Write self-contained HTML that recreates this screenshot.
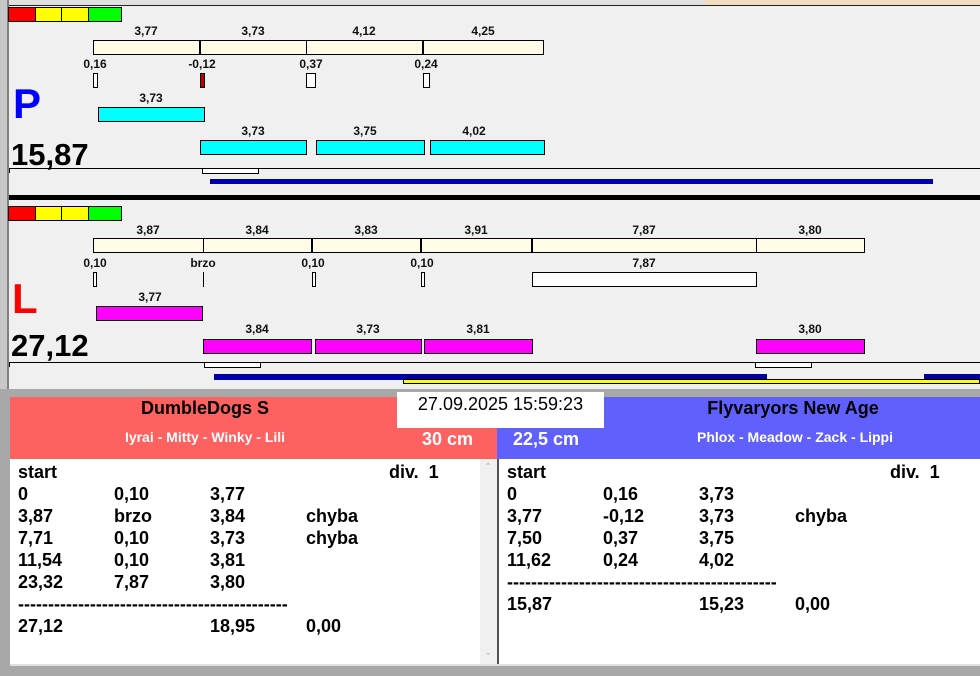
<!DOCTYPE html>
<html><head><meta charset="utf-8"><style>
*{margin:0;padding:0;box-sizing:border-box}
body{width:980px;height:676px;overflow:hidden;background:#f0f0f0;position:relative;font-family:"Liberation Sans",Arial,sans-serif}
div{position:absolute}
.b{border:1px solid #000}
.cr{background:#fffbe6}
.cy{background:#00ffff}
.mg{background:#ff00ff}
.w{background:#fff}
.l{font-size:12px;font-weight:bold;width:60px;text-align:center;line-height:14px;color:#111}
.t{font-size:18px;font-weight:bold;line-height:22px;color:#000;white-space:pre}
</style></head><body>
<div style="left:0;top:0;width:980px;height:5px;background:#e0e0e0"></div>
<div style="left:705px;top:0;width:275px;height:5px;background:#f0dcc0"></div>
<div style="left:0;top:5px;width:980px;height:1px;background:#222"></div>
<div style="left:0;top:0;width:7px;height:390px;background:#c8c8c8"></div>
<div style="left:7px;top:0;width:2px;height:390px;background:#808080"></div>

<div class="b" style="left:8px;top:7px;width:28px;height:15px;background:#f00"></div>
<div class="b" style="left:35px;top:7px;width:27px;height:15px;background:#ff0"></div>
<div class="b" style="left:61px;top:7px;width:28px;height:15px;background:#ff0"></div>
<div class="b" style="left:88px;top:7px;width:34px;height:15px;background:#0f0"></div>

<div class="l" style="left:116px;top:24px">3,77</div>
<div class="l" style="left:223px;top:24px">3,73</div>
<div class="l" style="left:334px;top:24px">4,12</div>
<div class="l" style="left:453px;top:24px">4,25</div>
<div class="b cr" style="left:93px;top:40px;width:451px;height:15px"></div>
<div style="left:199px;top:40px;width:2px;height:15px;background:#000"></div>
<div style="left:306px;top:40px;width:1px;height:15px;background:#000"></div>
<div style="left:422px;top:40px;width:2px;height:15px;background:#000"></div>
<div class="l" style="left:65px;top:57px">0,16</div>
<div class="l" style="left:172px;top:57px">-0,12</div>
<div class="l" style="left:281px;top:57px">0,37</div>
<div class="l" style="left:396px;top:57px">0,24</div>
<div class="b w" style="left:93px;top:73px;width:5px;height:15px"></div>
<div class="b" style="left:200px;top:73px;width:5px;height:15px;background:#c00000"></div>
<div class="b w" style="left:306px;top:73px;width:10px;height:15px"></div>
<div class="b w" style="left:423px;top:73px;width:7px;height:15px"></div>

<div style="left:13px;top:80px;font-size:42px;font-weight:bold;color:#0000ff;line-height:48px">P</div>
<div class="l" style="left:121px;top:91px">3,73</div>
<div class="b cy" style="left:98px;top:107px;width:107px;height:15px"></div>
<div class="l" style="left:223px;top:124px">3,73</div>
<div class="l" style="left:335px;top:124px">3,75</div>
<div class="l" style="left:444px;top:124px">4,02</div>
<div class="b cy" style="left:200px;top:140px;width:107px;height:15px"></div>
<div class="b cy" style="left:316px;top:140px;width:109px;height:15px"></div>
<div class="b cy" style="left:430px;top:140px;width:115px;height:15px"></div>
<div style="left:11px;top:137px;font-size:31px;font-weight:bold;line-height:36px;color:#000">15,87</div>
<div style="left:9px;top:168px;width:971px;height:1px;background:#000"></div>
<div style="left:9px;top:168px;width:1px;height:5px;background:#000"></div>
<div class="b w" style="left:202px;top:168px;width:57px;height:6px"></div>
<div style="left:210px;top:179px;width:723px;height:5px;background:#0000a8"></div>
<div style="left:9px;top:195px;width:971px;height:5px;background:#000"></div>

<div class="b" style="left:8px;top:206px;width:28px;height:15px;background:#f00"></div>
<div class="b" style="left:35px;top:206px;width:27px;height:15px;background:#ff0"></div>
<div class="b" style="left:61px;top:206px;width:28px;height:15px;background:#ff0"></div>
<div class="b" style="left:88px;top:206px;width:34px;height:15px;background:#0f0"></div>

<div class="l" style="left:118px;top:223px">3,87</div>
<div class="l" style="left:227px;top:223px">3,84</div>
<div class="l" style="left:336px;top:223px">3,83</div>
<div class="l" style="left:446px;top:223px">3,91</div>
<div class="l" style="left:614px;top:223px">7,87</div>
<div class="l" style="left:780px;top:223px">3,80</div>
<div class="b cr" style="left:93px;top:238px;width:772px;height:15px"></div>
<div style="left:203px;top:238px;width:1px;height:15px;background:#000"></div>
<div style="left:311px;top:238px;width:2px;height:15px;background:#000"></div>
<div style="left:420px;top:238px;width:2px;height:15px;background:#000"></div>
<div style="left:531px;top:238px;width:2px;height:15px;background:#000"></div>
<div style="left:756px;top:238px;width:1px;height:15px;background:#000"></div>
<div class="l" style="left:65px;top:256px">0,10</div>
<div class="l" style="left:173px;top:256px">brzo</div>
<div class="l" style="left:283px;top:256px">0,10</div>
<div class="l" style="left:392px;top:256px">0,10</div>
<div class="l" style="left:614px;top:256px">7,87</div>
<div class="b w" style="left:93px;top:272px;width:4px;height:15px"></div>
<div style="left:203px;top:272px;width:1px;height:15px;background:#000"></div>
<div class="b w" style="left:312px;top:272px;width:4px;height:15px"></div>
<div class="b w" style="left:421px;top:272px;width:4px;height:15px"></div>
<div class="b w" style="left:532px;top:272px;width:225px;height:15px"></div>

<div style="left:12px;top:275px;font-size:42px;font-weight:bold;color:#ff0000;line-height:48px">L</div>
<div class="l" style="left:120px;top:290px">3,77</div>
<div class="b mg" style="left:96px;top:306px;width:107px;height:15px"></div>
<div class="l" style="left:227px;top:322px">3,84</div>
<div class="l" style="left:338px;top:322px">3,73</div>
<div class="l" style="left:448px;top:322px">3,81</div>
<div class="l" style="left:780px;top:322px">3,80</div>
<div class="b mg" style="left:203px;top:339px;width:109px;height:15px"></div>
<div class="b mg" style="left:315px;top:339px;width:107px;height:15px"></div>
<div class="b mg" style="left:424px;top:339px;width:109px;height:15px"></div>
<div class="b mg" style="left:756px;top:339px;width:109px;height:15px"></div>
<div style="left:11px;top:328px;font-size:31px;font-weight:bold;line-height:36px;color:#000">27,12</div>
<div style="left:9px;top:362px;width:971px;height:1px;background:#000"></div>
<div style="left:9px;top:362px;width:1px;height:5px;background:#000"></div>
<div class="b w" style="left:204px;top:362px;width:57px;height:6px"></div>
<div class="b w" style="left:755px;top:362px;width:57px;height:6px"></div>
<div style="left:214px;top:374px;width:553px;height:6px;background:#0000a8"></div>
<div style="left:924px;top:374px;width:56px;height:6px;background:#0000a8"></div>
<div class="b" style="left:403px;top:379px;width:577px;height:5px;background:#ffff00"></div>

<div style="left:0;top:389px;width:980px;height:8px;background:#a8a8a8"></div>
<div style="left:0;top:389px;width:10px;height:287px;background:#a8a8a8"></div>
<div style="left:0;top:664px;width:980px;height:12px;background:#a8a8a8"></div>
<div style="left:10px;top:664px;width:970px;height:2px;background:#e0e0e0"></div>

<div style="left:10px;top:397px;width:487px;height:62px;background:#ff6060"></div>
<div style="left:497px;top:397px;width:483px;height:62px;background:#6060ff"></div>
<div style="left:5px;top:396px;width:400px;text-align:center;font-size:18px;font-weight:bold;line-height:24px;color:#000">DumbleDogs S</div>
<div style="left:5px;top:428px;width:400px;text-align:center;font-size:14px;font-weight:bold;line-height:18px;color:#fff">Iyrai - Mitty - Winky - Lili</div>
<div style="left:422px;top:428px;font-size:18px;font-weight:bold;line-height:22px;color:#fff">30 cm</div>
<div style="left:513px;top:428px;font-size:18px;font-weight:bold;line-height:22px;color:#fff">22,5 cm</div>
<div style="left:598px;top:396px;width:390px;text-align:center;font-size:18px;font-weight:bold;line-height:24px;color:#000">Flyvaryors New Age</div>
<div style="left:610px;top:428px;width:370px;text-align:center;font-size:14px;font-weight:bold;line-height:18px;color:#fff">Phlox - Meadow - Zack - Lippi</div>
<div style="left:397px;top:392px;width:207px;height:36px;background:#fff;font-size:18px;line-height:24px;text-align:center;color:#000">27.09.2025 15:59:23</div>

<div style="left:10px;top:459px;width:470px;height:205px;background:#fff"></div>
<div style="left:480px;top:459px;width:17px;height:205px;background:#f0f0f0;color:#bbb;font-size:10px;text-align:center"><span style="position:absolute;top:3px;left:4px">&#8963;</span><span style="position:absolute;top:188px;left:4px">&#8964;</span></div>
<div style="left:497px;top:459px;width:2px;height:205px;background:#555"></div>
<div style="left:499px;top:459px;width:481px;height:205px;background:#fff"></div>

<div class="t" style="left:18px;top:461px">start</div>
<div class="t" style="left:389px;top:461px">div.  1</div>
<div class="t" style="left:18px;top:483px">0</div><div class="t" style="left:114px;top:483px">0,10</div><div class="t" style="left:210px;top:483px">3,77</div>
<div class="t" style="left:18px;top:505px">3,87</div><div class="t" style="left:114px;top:505px">brzo</div><div class="t" style="left:210px;top:505px">3,84</div><div class="t" style="left:306px;top:505px">chyba</div>
<div class="t" style="left:18px;top:527px">7,71</div><div class="t" style="left:114px;top:527px">0,10</div><div class="t" style="left:210px;top:527px">3,73</div><div class="t" style="left:306px;top:527px">chyba</div>
<div class="t" style="left:18px;top:549px">11,54</div><div class="t" style="left:114px;top:549px">0,10</div><div class="t" style="left:210px;top:549px">3,81</div>
<div class="t" style="left:18px;top:571px">23,32</div><div class="t" style="left:114px;top:571px">7,87</div><div class="t" style="left:210px;top:571px">3,80</div>
<div class="t" style="left:18px;top:593px">---------------------------------------------</div>
<div class="t" style="left:18px;top:615px">27,12</div><div class="t" style="left:210px;top:615px">18,95</div><div class="t" style="left:306px;top:615px">0,00</div>

<div class="t" style="left:507px;top:461px">start</div>
<div class="t" style="left:890px;top:461px">div.  1</div>
<div class="t" style="left:507px;top:483px">0</div><div class="t" style="left:603px;top:483px">0,16</div><div class="t" style="left:699px;top:483px">3,73</div>
<div class="t" style="left:507px;top:505px">3,77</div><div class="t" style="left:603px;top:505px">-0,12</div><div class="t" style="left:699px;top:505px">3,73</div><div class="t" style="left:795px;top:505px">chyba</div>
<div class="t" style="left:507px;top:527px">7,50</div><div class="t" style="left:603px;top:527px">0,37</div><div class="t" style="left:699px;top:527px">3,75</div>
<div class="t" style="left:507px;top:549px">11,62</div><div class="t" style="left:603px;top:549px">0,24</div><div class="t" style="left:699px;top:549px">4,02</div>
<div class="t" style="left:507px;top:571px">---------------------------------------------</div>
<div class="t" style="left:507px;top:593px">15,87</div><div class="t" style="left:699px;top:593px">15,23</div><div class="t" style="left:795px;top:593px">0,00</div>
</body></html>
